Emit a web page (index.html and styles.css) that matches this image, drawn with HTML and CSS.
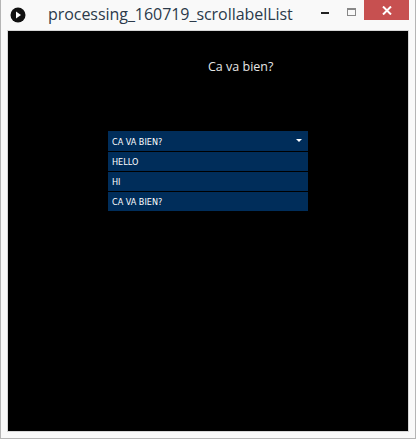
FILE: index.html
```html
<!DOCTYPE html>
<html lang="en">
<head>
  <meta charset="UTF-8">
  <title>processing_160719_scrollabelList</title>
  <link rel="stylesheet" href="styles.css">
</head>
<body>
  <div class="window">
    <div class="titlebar">
      <svg class="app-icon" width="16" height="16" viewBox="0 0 16 16">
        <circle cx="8" cy="8" r="7.5" fill="#111"/>
        <path d="M6 4.5 L11 8 L6 11.5 Z" fill="#fff"/>
      </svg>
      <span class="title">processing_160719_scrollabelList</span>
      <div class="controls">
        <span class="btn-min"></span>
        <span class="btn-max"></span>
        <span class="btn-close">
          <svg width="10" height="9" viewBox="0 0 10 9">
            <path d="M1 0.5 L9 8.5 M9 0.5 L1 8.5" stroke="#fff" stroke-width="2"/>
          </svg>
        </span>
      </div>
    </div>
    <div class="canvas">
      <p class="label">Ca va bien?</p>
      <div class="dropdown">
        <div class="dd-header">
          <span>CA VA BIEN?</span>
          <span class="dd-arrow"></span>
        </div>
        <div class="dd-item">HELLO</div>
        <div class="dd-item">HI</div>
        <div class="dd-item">CA VA BIEN?</div>
      </div>
    </div>
  </div>
</body>
</html>
```

FILE: styles.css
```css
body {
  margin: 0;
  background: #fff;
}
.window {
  width: 416px;
  height: 439px;
  box-sizing: border-box;
  background: #f9f9f9;
  border: 1px solid #b5b5b5;
  border-top: none;
  display: flex;
  flex-direction: column;
}
.titlebar {
  height: 30px;
  display: flex;
  align-items: flex-start;
}
.app-icon {
  margin: 7px 0 0 9px;
}
.title {
  font-family: 'Open Sans', sans-serif;
  font-size: 16px;
  color: #2b3a4a;
  margin: 4px 0 0 22px;
  line-height: 20px;
  letter-spacing: -0.05px;
}
.controls {
  margin-left: auto;
  margin-right: 6px;
  display: flex;
  align-items: flex-start;
}
.btn-min {
  width: 8px;
  height: 2px;
  background: #222;
  margin: 12px 0 0 0;
}
.btn-max {
  width: 7px;
  height: 5px;
  border: 1px solid #888;
  border-top-width: 2px;
  margin: 8px 0 0 18px;
}
.btn-close {
  width: 45px;
  height: 20px;
  background: #c75050;
  margin-left: 8px;
  display: flex;
  justify-content: center;
  align-items: center;
}
.canvas {
  width: 400px;
  height: 400px;
  margin-left: 6px;
  background: #000;
  border: 1px solid #d6d6d6;
}
.label {
  margin: 28px 0 0 200px;
  font-family: 'Open Sans', sans-serif;
  font-size: 12.5px;
  line-height: 16px;
  color: #e6e6e6;
}
.dropdown {
  width: 200px;
  margin: 56px 0 0 100px;
  font-family: 'DejaVu Sans Condensed', 'DejaVu Sans', sans-serif;
  font-size: 9px;
  color: #fff;
}
.dd-header {
  height: 20px;
  background: #002d5a;
  display: flex;
  align-items: flex-end;
  padding: 0 4px 4px 4px;
  box-sizing: border-box;
  line-height: 10px;
}
.dd-arrow {
  margin: 0 2px 5px auto;
  width: 0;
  height: 0;
  border-left: 3px solid transparent;
  border-right: 3px solid transparent;
  border-top: 3px solid #fff;
}
.dd-item {
  height: 19px;
  margin-top: 1px;
  background: #002d5a;
  padding: 5px 4px 0 4px;
  box-sizing: border-box;
  line-height: 10px;
}
```
